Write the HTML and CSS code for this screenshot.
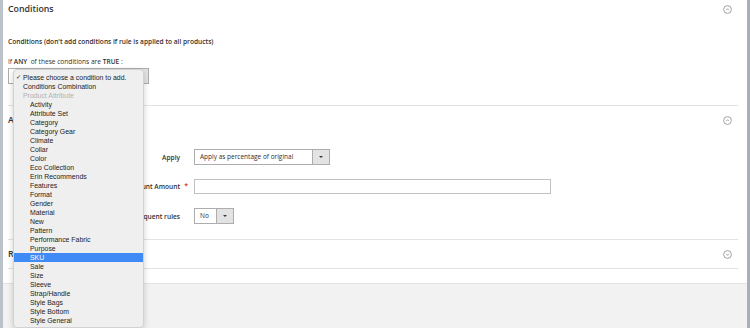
FILE: index.html
```html
<!DOCTYPE html>
<html lang="en">
<head>
    <meta charset="UTF-8">
    <title>Cart Price Rule - Conditions</title>
    <link rel="stylesheet" href="styles.css">
</head>
<body>
<div class="page">
    <div class="side side-left"></div>
    <div class="main">
        <div class="content">

            <!-- Conditions -->
            <section class="fieldset fs-conditions">
                <div class="fs-title">
                    <h2>Conditions</h2>
                    <svg class="toggle" width="9" height="9" viewBox="0 0 9 9"><circle cx="4.5" cy="4.5" r="3.9"/><path d="M3.1 5.1 L4.5 3.7 L5.9 5.1"/></svg>
                </div>
                <p class="note">Conditions (don't add conditions if rule is applied to all products)</p>
                <p class="rule">If <b>ANY</b>&nbsp; of these conditions are <b>TRUE</b> :</p>
                <div class="select-wrap">
                    <div class="select cond-select">
                        <span class="val"></span>
                        <span class="arrow"></span>
                    </div>
                    <ul class="menu">
                        <li class="checked">Please choose a condition to add.</li>
                        <li>Conditions Combination</li>
                        <li class="group">Product Attribute</li>
                        <li class="sub">Activity</li>
                        <li class="sub">Attribute Set</li>
                        <li class="sub">Category</li>
                        <li class="sub">Category Gear</li>
                        <li class="sub">Climate</li>
                        <li class="sub">Collar</li>
                        <li class="sub">Color</li>
                        <li class="sub">Eco Collection</li>
                        <li class="sub">Erin Recommends</li>
                        <li class="sub">Features</li>
                        <li class="sub">Format</li>
                        <li class="sub">Gender</li>
                        <li class="sub">Material</li>
                        <li class="sub">New</li>
                        <li class="sub">Pattern</li>
                        <li class="sub">Performance Fabric</li>
                        <li class="sub">Purpose</li>
                        <li class="sub active">SKU</li>
                        <li class="sub">Sale</li>
                        <li class="sub">Size</li>
                        <li class="sub">Sleeve</li>
                        <li class="sub">Strap/Handle</li>
                        <li class="sub">Style Bags</li>
                        <li class="sub">Style Bottom</li>
                        <li class="sub">Style General</li>
                    </ul>
                </div>
            </section>

            <!-- Actions -->
            <section class="fieldset fs-actions">
                <div class="fs-title">
                    <h2>Actions</h2>
                    <svg class="toggle" width="9" height="9" viewBox="0 0 9 9"><circle cx="4.5" cy="4.5" r="3.9"/><path d="M3.1 5.1 L4.5 3.7 L5.9 5.1"/></svg>
                </div>
                <div class="form">
                    <div class="field">
                        <label class="label">Apply</label>
                        <div class="select apply-select">
                            <span class="val">Apply as percentage of original</span>
                            <span class="arrow"></span>
                        </div>
                    </div>
                    <div class="field">
                        <label class="label required">Discount Amount</label>
                        <input class="input" type="text">
                    </div>
                    <div class="field">
                        <label class="label">Discard subsequent rules</label>
                        <div class="select no-select">
                            <span class="val">No</span>
                            <span class="arrow"></span>
                        </div>
                    </div>
                </div>
            </section>

            <!-- Related -->
            <section class="fieldset fs-related">
                <div class="fs-title">
                    <h2>Related Dynamic Blocks</h2>
                    <svg class="toggle" width="9" height="9" viewBox="0 0 9 9"><circle cx="4.5" cy="4.5" r="3.9"/><path d="M3.1 3.9 L4.5 5.3 L5.9 3.9"/></svg>
                </div>
            </section>

        </div>
        <div class="footer"></div>
    </div>
    <div class="side side-right"></div>
</div>
</body>
</html>
```

FILE: styles.css
```css
body {
    margin: 0;
    font-family: "Open Sans", sans-serif;
    color: #303030;
    background: #fff;
    overflow: hidden;
}
.page {
    display: flex;
    height: 328px;
}
.side-left {
    width: 3px;
    background: #bcc2c9;
}
.side-right {
    width: 3px;
    background: #a9afb6;
}
.main {
    flex: 1;
    display: flex;
    flex-direction: column;
}
.content {
    height: 283px;
    padding: 0 9px 0 5px;
    background: #fff;
}
.footer {
    flex: 1;
    background: #f2f2f2;
    border-top: 1px solid #e3e3e3;
}

/* fieldsets */
.fieldset {
    border-bottom: 1px solid #e3e3e3;
}
.fs-title {
    display: flex;
    align-items: center;
    justify-content: space-between;
    height: 18px;
}
.fs-title h2 {
    margin: 0;
    font-size: 8.8px;
    font-weight: 600;
    color: #333;
}
.toggle {
    margin-right: 6px;
    fill: none;
    stroke: #8c8c8c;
    stroke-width: 0.8;
}
.fs-conditions {
    padding-bottom: 21px;
}
.fs-actions {
    padding: 5px 0 15px;
}
.fs-related {
    padding: 5px 0 5px;
}

.note {
    margin: 19px 0 0;
    font-size: 6.6px;
    font-weight: 600;
    line-height: 10px;
}
.rule {
    margin: 10px 0 0;
    font-size: 6.6px;
    line-height: 10px;
}
.rule b {
    font-weight: 600;
}

/* selects and inputs */
.select {
    display: flex;
    height: 16px;
    box-sizing: border-box;
    border: 1px solid #adadad;
    background: #fff;
    font-size: 6.5px;
}
.select .val {
    flex: 1;
    padding-left: 5px;
    line-height: 14px;
    white-space: nowrap;
}
.select .arrow {
    width: 16px;
    display: flex;
    align-items: center;
    justify-content: center;
    background: #e3e3e3;
    border-left: 1px solid #adadad;
}
.select .arrow::after {
    content: "";
    border-left: 2px solid transparent;
    border-right: 2px solid transparent;
    border-top: 2px solid #41362f;
}
.select-wrap {
    position: relative;
    margin-top: 1px;
    width: 141px;
}
.cond-select {
    width: 141px;
}
.apply-select {
    width: 136px;
}
.no-select {
    width: 40px;
}
.input {
    width: 357px;
    height: 15px;
    box-sizing: border-box;
    border: 1px solid #c2c2c2;
    margin: 0;
    padding: 0 4px;
}

/* form rows */
.form {
    display: flex;
    flex-direction: column;
    gap: 13.5px;
    margin-top: 20px;
}
.field {
    display: flex;
    align-items: center;
    height: 16px;
    gap: 14px;
}
.label {
    position: relative;
    width: 172px;
    text-align: right;
    font-size: 6.6px;
    font-weight: 600;
    white-space: nowrap;
}
.required::after {
    content: "*";
    position: absolute;
    right: -8px;
    top: -1px;
    color: #e22626;
    font-size: 7px;
}

/* native popup menu */
.menu {
    position: absolute;
    z-index: 10;
    left: 5px;
    top: 1px;
    width: 131px;
    margin: 0;
    padding: 2.5px 0 2px;
    list-style: none;
    background: #efefef;
    border: 1px solid #d2d2d2;
    box-sizing: border-box;
    border-radius: 4px;
    box-shadow: 0 2px 6px rgba(0, 0, 0, 0.18);
    font-family: "Liberation Sans", Arial, sans-serif;
    font-size: 6.9px;
    color: #222;
}
.menu li {
    line-height: 9.04px;
    height: 9.04px;
    padding-left: 9px;
    white-space: nowrap;
}
.menu li.sub {
    padding-left: 16px;
}
.menu li.group {
    color: #b2b2b2;
}
.menu li.checked {
    position: relative;
}
.menu li.checked::before {
    content: "\2713";
    position: absolute;
    left: 2px;
    font-size: 6px;
}
.menu li.active {
    background: #3f8af4;
    color: #fff;
}
```
